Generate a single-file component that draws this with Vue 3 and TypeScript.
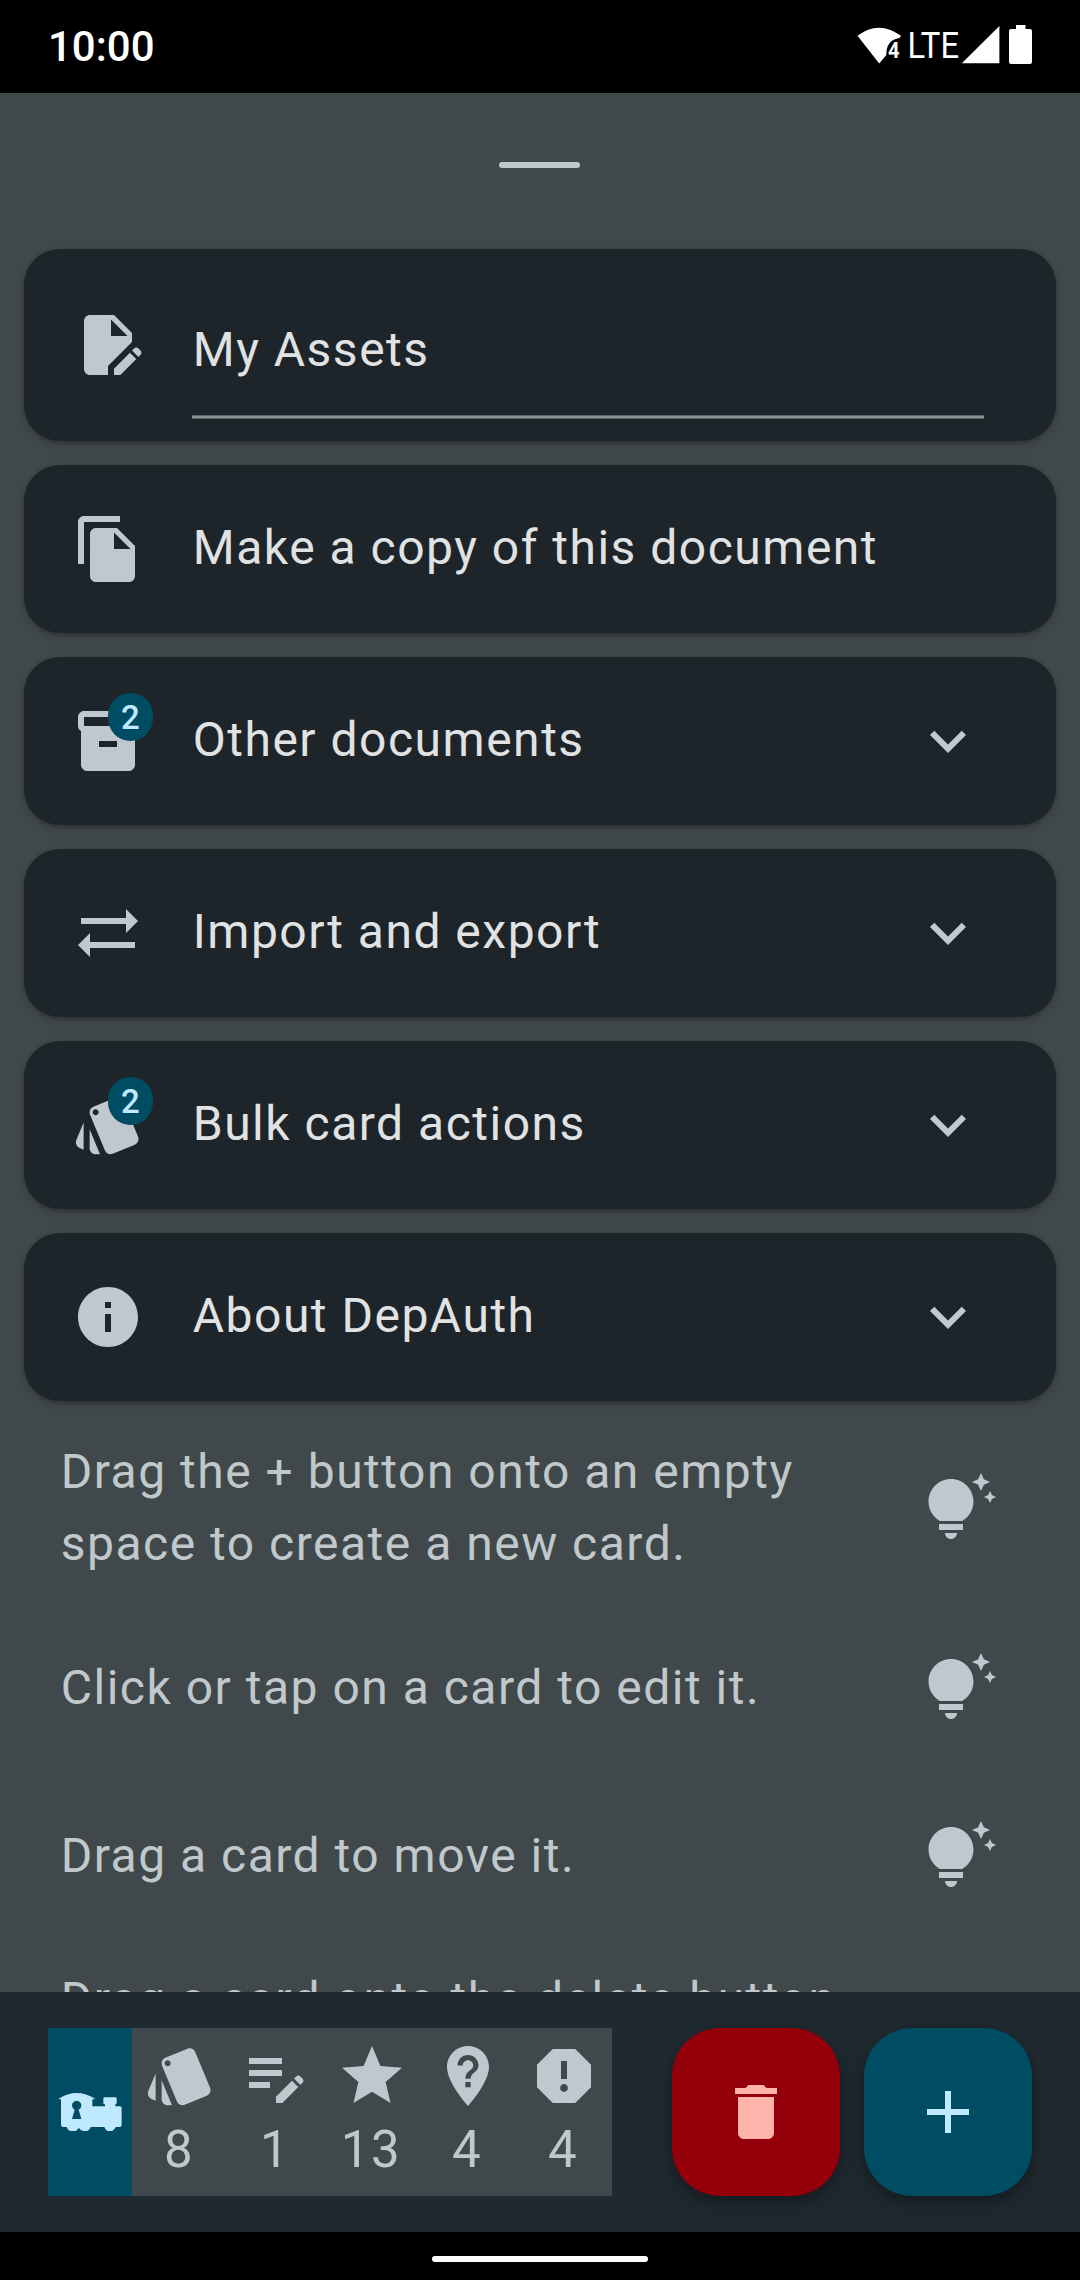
<script setup lang="ts">
interface MenuCard {
  label: string
  icon: string
  badge?: number
  expandable?: boolean
}

interface Stat {
  icon: string
  count: number
}

const STYLE_ICON =
  'M2.53 19.65l1.34.56v-9.03l-2.43 5.86c-.41 1.02.08 2.19 1.09 2.61zm19.5-3.7L17.07 3.98c-.31-.75-1.04-1.21-1.81-1.23-.26 0-.53.04-.79.15L7.1 5.95c-.75.31-1.21 1.03-1.23 1.8-.01.27.04.54.15.8l4.96 11.97c.31.76 1.05 1.22 1.83 1.23.26 0 .52-.05.77-.15l7.36-3.05c1.02-.42 1.51-1.59 1.09-2.6zM7.88 8.75c-.55 0-1-.45-1-1s.45-1 1-1 1 .45 1 1-.45 1-1 1zm-2 11c0 1.1.9 2 2 2h1.45l-3.45-8.34v6.34z'
const EDIT_DOCUMENT_ICON =
  'M6 2h8l6 6v3.01l-8 8V22H6c-1.1 0-2-.9-2-2V4c0-1.1.9-2 2-2zm7 7h5.5L13 3.5V9zM20.01 13.87l.71-.71c.39-.39 1.02-.39 1.41 0l.71.71c.39.39.39 1.02 0 1.41l-.71.71-2.12-2.12zm-.71.71l-5.3 5.3V22h2.12l5.3-5.3-2.12-2.12z'
const EXPAND_ICON = 'M16.59 8.59L12 13.17 7.41 8.59 6 10l6 6 6-6z'
const TIP_ICON =
  'M7 20h4c0 1.1-.9 2-2 2s-2-.9-2-2zm-2-1h8v-2H5v2zm11.5-9.5c0 3.82-2.66 5.86-3.77 6.5H5.27c-1.11-.64-3.77-2.68-3.77-6.5C1.5 5.36 4.86 2 9 2s7.5 3.36 7.5 7.5zm4.87-2.13L20 8l1.37.63L22 10l.63-1.37L24 8l-1.37-.63L22 6l-.63 1.37zM19 6l.94-2.06L22 3l-2.06-.94L19 0l-.94 2.06L16 3l2.06.94L19 6z'
const DELETE_ICON =
  'M6 19c0 1.1.9 2 2 2h8c1.1 0 2-.9 2-2V7H6v12zM19 4h-3.5l-1-1h-5l-1 1H5v2h14V4z'
const ADD_ICON = 'M19 13h-6v6h-2v-6H5v-2h6V5h2v6h6v2z'

const cards: MenuCard[] = [
  {
    label: 'Make a copy of this document',
    icon: 'M16 1H4c-1.1 0-2 .9-2 2v14h2V3h12V1zm-1 4l6 6v10c0 1.1-.9 2-2 2H7.99C6.89 23 6 22.1 6 21l.01-14c0-1.1.89-2 1.99-2h7zm-1 7h5.5L14 6.5V12z',
  },
  {
    label: 'Other documents',
    icon: 'M20 2H4c-1 0-2 .9-2 2v3.01c0 .72.43 1.34 1 1.69V20c0 1.1 1.1 2 2 2h14c.9 0 2-.9 2-2V8.7c.57-.35 1-.97 1-1.69V4c0-1.1-1-2-2-2zm-5 12H9v-2h6v2zm5-7H4V4h16v3z',
    badge: 2,
    expandable: true,
  },
  {
    label: 'Import and export',
    icon: 'M22 8l-4-4v3H3v2h15v3l4-4zM2 16l4 4v-3h15v-2H6v-3l-4 4z',
    expandable: true,
  },
  { label: 'Bulk card actions', icon: STYLE_ICON, badge: 2, expandable: true },
  {
    label: 'About DepAuth',
    icon: 'M12 2C6.48 2 2 6.48 2 12s4.48 10 10 10 10-4.48 10-10S17.52 2 12 2zm1 15h-2v-6h2v6zm0-8h-2V7h2v2z',
    expandable: true,
  },
]

const tips: string[] = [
  'Drag the + button onto an empty\nspace to create a new card.',
  'Click or tap on a card to edit it.',
  'Drag a card to move it.',
  'Drag a card onto the delete button\nto delete it.',
]

const stats: Stat[] = [
  { icon: STYLE_ICON, count: 8 },
  {
    icon: 'M3 10h11v2H3v-2zm0-2h11V6H3v2zm0 8h7v-2H3v2zm15.01-3.13l.71-.71c.39-.39 1.02-.39 1.41 0l.71.71c.39.39.39 1.02 0 1.41l-.71.71-2.12-2.12zm-.71.71l-5.3 5.3V21h2.12l5.3-5.3-2.12-2.12z',
    count: 1,
  },
  {
    icon: 'M12 17.27L18.18 21l-1.64-7.03L22 9.24l-7.19-.61L12 2 9.19 8.63 2 9.24l5.46 4.73L5.82 21z',
    count: 13,
  },
  {
    icon: 'M12 2C8.14 2 5 5.14 5 9c0 5.25 7 13 7 13s7-7.75 7-13c0-3.86-3.14-7-7-7zm.88 13.75h-1.75V14h1.75v1.75zm0-2.87h-1.75c0-2.84 2.62-2.62 2.62-4.38 0-.96-.79-1.75-1.75-1.75s-1.75.79-1.75 1.75H8.5C8.5 6.57 10.07 5 12 5s3.5 1.57 3.5 3.5c0 2.19-2.62 2.41-2.62 4.38z',
    count: 4,
  },
  {
    icon: 'M15.73 3H8.27L3 8.27v7.46L8.27 21h7.46L21 15.73V8.27L15.73 3zM12 17.3c-.72 0-1.3-.58-1.3-1.3 0-.72.58-1.3 1.3-1.3.72 0 1.3.58 1.3 1.3 0 .72-.58 1.3-1.3 1.3zm1-4.3h-2V7h2v6z',
    count: 4,
  },
]
</script>

<template>
  <div class="screen">
    <header class="status-bar">
      <span class="clock">10:00</span>
      <svg class="status-icons" viewBox="852 0 180 93">
        <path d="M857.5 35.8Q878.5 19.5 901 35.8L899.6 38Q886 40 886.3 55L879.2 63.5z" />
        <text class="wifi-mark" x="888" y="57.5" textLength="11.5" lengthAdjust="spacingAndGlyphs">4</text>
        <text class="lte" x="907.6" y="58" textLength="51.5" lengthAdjust="spacingAndGlyphs">LTE</text>
        <path d="M961.8 63.3L999.4 26v37.3z" />
        <path d="M1016 25h9.5v4h4.5q2 0 2 2v31q0 2-2 2h-19q-2 0-2-2V31q0-2 2-2h5z" />
      </svg>
    </header>

    <main class="sheet">
      <div class="handle-area"><div class="handle"></div></div>

      <div class="cards">
        <section class="card name-card">
          <svg class="icon" viewBox="0 0 24 24"><path :d="EDIT_DOCUMENT_ICON" /></svg>
          <div class="field"><span class="label">My Assets</span></div>
        </section>
        <section v-for="card in cards" :key="card.label" class="card">
          <div class="icon-wrap">
            <svg class="icon" viewBox="0 0 24 24"><path :d="card.icon" /></svg>
            <span v-if="card.badge" class="badge">{{ card.badge }}</span>
          </div>
          <span class="label">{{ card.label }}</span>
          <svg v-if="card.expandable" class="icon chevron" viewBox="0 0 24 24"><path :d="EXPAND_ICON" /></svg>
        </section>
      </div>

      <ul class="tips">
        <li v-for="tip in tips" :key="tip" class="tip">
          <span class="tip-text">{{ tip }}</span>
          <svg class="icon" viewBox="0 0 24 24"><path :d="TIP_ICON" /></svg>
        </li>
      </ul>
    </main>

    <footer class="bottom-bar">
      <div class="stats">
        <div class="train">
          <svg viewBox="42 228 216 216">
            <path
              fill-rule="evenodd"
              d="M56 296Q82 279 110 279Q138 279 165 296L163 298H157V319H195V313H193Q190 313 190 310V296Q190 292 194 292H226Q230 292 230 296V310Q230 313 227 313H226V319H239Q245 319 245 325V375Q245 381 239 381H227Q221 393 214 393H205Q198 393 193 381H152Q147 393 139 393H130Q122 393 116 383Q111 393 103 393H92Q85 393 80 381H70Q63 381 63 374V298H58ZM104 329L96 357H124L116 329A14 14 0 1 0 104 329Z"
            />
          </svg>
        </div>
        <div v-for="(stat, i) in stats" :key="i" class="stat">
          <svg class="icon" viewBox="0 0 24 24"><path :d="stat.icon" /></svg>
          <span class="count">{{ stat.count }}</span>
        </div>
      </div>
      <button class="fab fab-delete" aria-label="Delete">
        <svg viewBox="0 0 24 24"><path :d="DELETE_ICON" /></svg>
      </button>
      <button class="fab fab-add" aria-label="Add">
        <svg viewBox="0 0 24 24"><path :d="ADD_ICON" /></svg>
      </button>
    </footer>

    <div class="nav-bar"><div class="nav-pill"></div></div>
  </div>
</template>

<style>
body {
  margin: 0;
  background: #000;
}
</style>

<style scoped>
.screen {
  width: 1080px;
  height: 2280px;
  display: flex;
  flex-direction: column;
  overflow: hidden;
  background: #000;
  font-family: Roboto, "Liberation Sans", sans-serif;
}

.status-bar {
  flex: none;
  height: 93px;
  padding: 0 48px;
  display: flex;
  justify-content: space-between;
  color: #fff;
}

.clock {
  font-size: 42px;
  font-weight: 500;
  line-height: 93px;
}

.status-icons {
  width: 180px;
  height: 93px;
  fill: #fff;
}

.wifi-mark {
  font-size: 22px;
  font-weight: 700;
}

.lte {
  font-size: 37.5px;
}

.sheet {
  flex: none;
  height: 1899px;
  overflow: hidden;
  background: #40484b;
}

.handle-area {
  height: 156px;
  display: flex;
  justify-content: center;
  padding: 69px 1px 0 0;
  box-sizing: border-box;
}

.handle {
  width: 81px;
  height: 6px;
  border-radius: 3px;
  background: #c0c8cc;
}

.cards {
  display: flex;
  flex-direction: column;
  gap: 24px;
  padding: 0 24px;
}

.card {
  height: 168px;
  box-sizing: border-box;
  padding: 0 72px 0 48px;
  display: flex;
  align-items: center;
  gap: 48px;
  border-radius: 36px;
  background: #1d252a;
  box-shadow: 0 3px 6px rgba(0, 0, 0, 0.22), 0 1px 3px rgba(0, 0, 0, 0.12);
}

.name-card {
  height: 192px;
}

.icon {
  flex: none;
  display: block;
  width: 72px;
  height: 72px;
  fill: #c0c7cf;
}

.icon-wrap {
  position: relative;
}

.badge {
  position: absolute;
  left: 36px;
  top: -12px;
  width: 45px;
  height: 48px;
  box-sizing: border-box;
  border-radius: 24px;
  background: #004d63;
  color: #bee9ff;
  font-size: 33px;
  font-weight: 500;
  line-height: 50px;
  text-align: center;
}

.label {
  flex: 1;
  padding-left: 0.75px;
  padding-bottom: 3px;
  color: #e1e2e4;
  font-size: 48px;
  letter-spacing: 1.5px;
  line-height: 72px;
  white-space: nowrap;
}

.field {
  flex: 1;
  height: 170px;
  align-self: flex-start;
  box-sizing: border-box;
  padding-top: 65px;
  display: flex;
  flex-direction: column;
  background: linear-gradient(#596266 1px, #8a9296 1px, #8a9296 3px, #596266 3px) left bottom / 100% 4px no-repeat;
}

.field .label {
  flex: none;
}

.tips {
  list-style: none;
  margin: 12px 0 0;
  padding: 0;
}

.tip {
  min-height: 168px;
  box-sizing: border-box;
  padding: 24px 84px 24px 60.75px;
  display: flex;
  align-items: center;
  justify-content: space-between;
}

.tip-text {
  position: relative;
  top: -1px;
  color: #c0c8cc;
  font-size: 48px;
  letter-spacing: 1.5px;
  line-height: 72px;
  white-space: pre;
}

.bottom-bar {
  flex: none;
  height: 240px;
  box-sizing: border-box;
  padding: 36px 48px;
  display: flex;
  gap: 24px;
  background: #1f2a30;
}

.stats {
  width: 564px;
  margin-right: 36px;
  display: flex;
  background: #40484b;
}

.train {
  width: 84px;
  display: flex;
  align-items: center;
  justify-content: center;
  background: #004d63;
}

.train svg {
  flex: none;
  width: 72px;
  height: 72px;
  fill: #bee9ff;
}

.stat {
  width: 96px;
  padding-top: 12px;
  display: flex;
  flex-direction: column;
  align-items: center;
}

.count {
  padding-right: 2px;
  color: #c0c8cc;
  font-size: 51px;
  letter-spacing: 1.5px;
  line-height: 75px;
}

.fab {
  width: 168px;
  height: 168px;
  padding: 0;
  border: 0;
  border-radius: 48px;
  display: flex;
  align-items: center;
  justify-content: center;
  box-shadow: 0 9px 21px rgba(0, 0, 0, 0.26), 0 3px 9px rgba(0, 0, 0, 0.14);
}

.fab svg {
  width: 72px;
  height: 72px;
}

.fab-delete {
  background: #93000a;
  fill: #ffb4ab;
}

.fab-add {
  background: #004d63;
  fill: #bee9ff;
}

.nav-bar {
  flex: none;
  height: 48px;
  display: flex;
  align-items: center;
  justify-content: center;
  padding-top: 6px;
  box-sizing: border-box;
}

.nav-pill {
  width: 216px;
  height: 6px;
  border-radius: 3px;
  background: #fff;
}
</style>
